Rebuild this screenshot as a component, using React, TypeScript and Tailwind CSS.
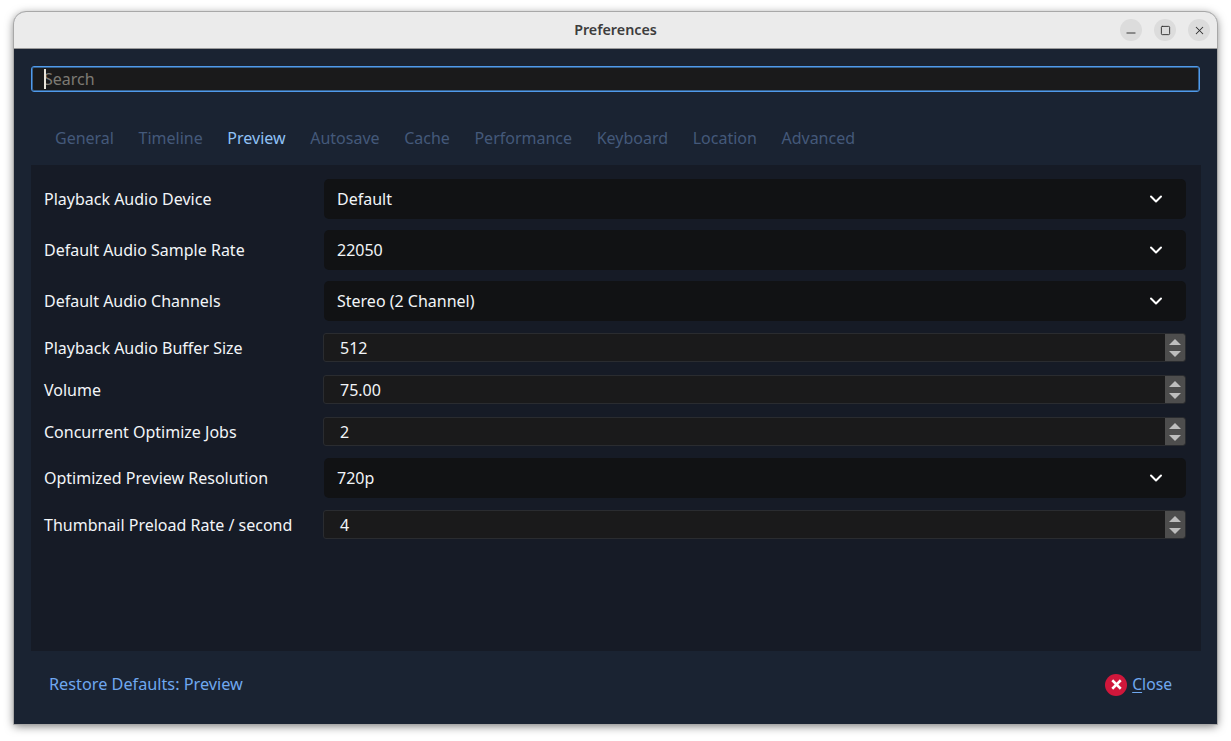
import React from 'react';
import { ChevronDown, Minus, Square, X } from 'lucide-react';

const tabs = ['General', 'Timeline', 'Preview', 'Autosave', 'Cache', 'Performance', 'Keyboard', 'Location', 'Advanced'];

type Row = { label: string; value: string; kind: 'select' | 'spin' };

const rows: Row[] = [
  { label: 'Playback Audio Device', value: 'Default', kind: 'select' },
  { label: 'Default Audio Sample Rate', value: '22050', kind: 'select' },
  { label: 'Default Audio Channels', value: 'Stereo (2 Channel)', kind: 'select' },
  { label: 'Playback Audio Buffer Size', value: '512', kind: 'spin' },
  { label: 'Volume', value: '75.00', kind: 'spin' },
  { label: 'Concurrent Optimize Jobs', value: '2', kind: 'spin' },
  { label: 'Optimized Preview Resolution', value: '720p', kind: 'select' },
  { label: 'Thumbnail Preload Rate / second', value: '4', kind: 'spin' },
];

const SelectField = ({ value }: { value: string }) => (
  <div className="flex h-10 items-center justify-between rounded-[5px] bg-[#111214] pl-[13px] pr-5 text-[#f2f5f8]">
    <span>{value}</span>
    <ChevronDown className="h-5 w-5 text-white" strokeWidth={2.4} />
  </div>
);

const SpinField = ({ value }: { value: string }) => (
  <div className="my-px -ml-px flex h-[29px] items-stretch overflow-hidden rounded-[3px] border border-[#2a2c30] bg-[#1a1a1b] text-[#f2f5f8]">
    <span className="flex flex-1 items-center pl-4">{value}</span>
    <div className="flex w-5 flex-col items-center justify-center gap-[6px] bg-[#4d4d4d]">
      <div className="h-0 w-0 border-x-[6px] border-b-[6px] border-x-transparent border-b-[#bdbdbd]" />
      <div className="h-0 w-0 border-x-[6px] border-t-[6px] border-x-transparent border-t-[#bdbdbd]" />
    </div>
  </div>
);

export default function App() {
  return (
    <div className="h-[741px] w-[1231px] overflow-hidden bg-white pl-[14px] pt-3 font-['Noto_Sans',sans-serif] text-base leading-5">
      <div className="flex h-[712px] w-[1203px] flex-col overflow-hidden rounded-t-[12px] bg-[#1a2332] shadow-[0_2px_10px_rgba(0,0,0,0.55)] outline outline-1 outline-[#a8a8a8]">
        {/* Title bar */}
        <div className="relative flex h-[37px] shrink-0 items-center justify-center border-b border-[#9a9a9a] bg-[#ebebeb] pb-px">
          <span className="text-[14.3px] font-semibold text-[#3d3d3d]">Preferences</span>
          <div className="absolute right-[7px] top-[7px] flex gap-3">
            <button className="flex h-[22px] w-[22px] items-center justify-center rounded-full bg-[#dcdcdc] text-[#2e2e2e]">
              <Minus className="mt-[6px] h-[14px] w-[14px]" strokeWidth={1.6} />
            </button>
            <button className="flex h-[22px] w-[22px] items-center justify-center rounded-full bg-[#dcdcdc] text-[#2e2e2e]">
              <Square className="h-[11px] w-[11px]" strokeWidth={2} />
            </button>
            <button className="flex h-[22px] w-[22px] items-center justify-center rounded-full bg-[#dcdcdc] text-[#2e2e2e]">
              <X className="h-[13px] w-[13px]" strokeWidth={1.9} />
            </button>
          </div>
        </div>

        {/* Search */}
        <div className="mx-[17px] mt-[17px] flex h-[26px] shrink-0 items-center rounded-[3px] border border-[#4f9aeb] bg-[#1a1a1b] pl-3 shadow-[inset_0_0_0_1px_rgba(74,144,217,0.6)]">
          <div className="relative text-[#7d7a74]">
            <span className="absolute left-0 top-0 h-5 w-[1.5px] bg-[#e8e4da]" />
            Search
          </div>
        </div>

        {/* Tabs */}
        <div className="mx-[17px] mt-9 flex h-[19px] shrink-0 items-center gap-[24.6px] pl-6 text-[#44597a]">
          {tabs.map((t) => (
            <span key={t} className={t === 'Preview' ? 'text-[#8fc1f5]' : ''}>
              {t}
            </span>
          ))}
        </div>

        {/* Panel */}
        <div className="ml-[17px] mr-4 mt-[18px] flex h-[486px] shrink-0 flex-col gap-[11px] bg-[#161b26] pl-[13px] pr-[15px] pt-[14px] text-[#f2f5f8]">
          {rows.map((r) => (
            <div key={r.label} className="grid grid-cols-[280px_1fr] items-center">
              <span>{r.label}</span>
              {r.kind === 'select' ? <SelectField value={r.value} /> : <SpinField value={r.value} />}
            </div>
          ))}
        </div>

        {/* Footer */}
        <div className="flex flex-1 items-center justify-between pb-[7px] pl-[35px] pr-[45px] text-[#6fa8ef]">
          <span className="text-[16.25px]">Restore Defaults: Preview</span>
          <div className="flex items-center gap-[5px]">
            <span className="mt-px flex h-[22px] w-[22px] items-center justify-center rounded-full bg-[#d0173b]">
              <X className="h-[17px] w-[17px] text-white" strokeWidth={3.6} strokeLinecap="butt" />
            </span>
            <span className="text-[15.7px]">
              <span className="underline underline-offset-2">C</span>lose
            </span>
          </div>
        </div>
      </div>
    </div>
  );
}
